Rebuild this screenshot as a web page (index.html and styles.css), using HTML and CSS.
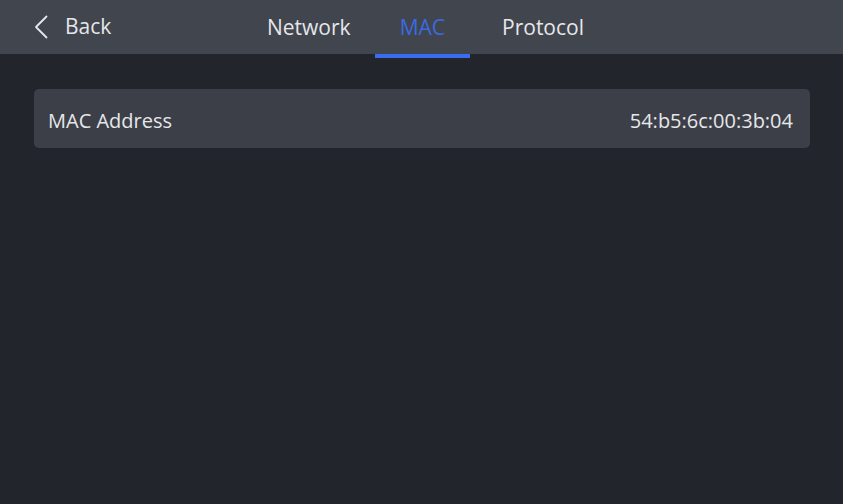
FILE: index.html
```html
<!DOCTYPE html>
<html>
<head>
<meta charset="utf-8">
<link rel="stylesheet" href="styles.css">
</head>
<body>
<header class="topbar">
  <div class="back">
    <svg class="chev" width="14" height="24" viewBox="0 0 14 24"><path d="M12.5 1.5 L2 12 L12.5 22.5" fill="none" stroke="#e6e7ea" stroke-width="1.8" stroke-linecap="round" stroke-linejoin="round"/></svg>
    <span class="back-label">Back</span>
  </div>
  <nav class="tabs">
    <div class="tab">Network</div>
    <div class="tab active">MAC</div>
    <div class="tab tab-last">Protocol</div>
  </nav>
</header>
<main class="content">
  <div class="row">
    <span class="row-label">MAC Address</span>
    <span class="row-value">54:b5:6c:00:3b:04</span>
  </div>
</main>
</body>
</html>
```
FILE: styles.css
```css
html, body {
  margin: 0;
  padding: 0;
  background: #23252d;
  height: 100%;
}
body {
  font-family: "Open Sans", "Noto Sans", sans-serif;
  color: #e6e7ea;
}
.topbar {
  height: 54px;
  background: #41454e;
  display: flex;
  align-items: stretch;
  box-sizing: border-box;
}
.back {
  display: flex;
  align-items: center;
  padding-left: 34px;
  padding-bottom: 3px;
  width: 208px;
  box-sizing: border-box;
}
.chev {
  display: block;
  margin-right: 17px;
  margin-top: 2px;
}
.back-label {
  font-size: 21px;
}
.tabs {
  display: flex;
  align-items: stretch;
}
.tab {
  font-size: 21px;
  padding: 0 24px 1px 24px;
  display: flex;
  align-items: center;
  box-sizing: border-box;
  position: relative;
}
.tab:first-child {
  padding-left: 59px;
}
.tab.active {
  color: #3b6ae0;
  padding: 0 25px 1px 25px;
}
.tab.active::after {
  content: "";
  position: absolute;
  left: 0;
  right: 0;
  bottom: -4px;
  height: 4px;
  background: #3a6cf0;
}
.tab-last {
  margin-left: 8px;
}
.content {
  padding: 35px 33px 0 34px;
}
.row {
  height: 59px;
  background: #3c3f47;
  border-radius: 5px;
  display: flex;
  align-items: center;
  justify-content: space-between;
  padding: 4px 17px 0 14px;
  box-sizing: border-box;
  font-size: 20px;
}
```
